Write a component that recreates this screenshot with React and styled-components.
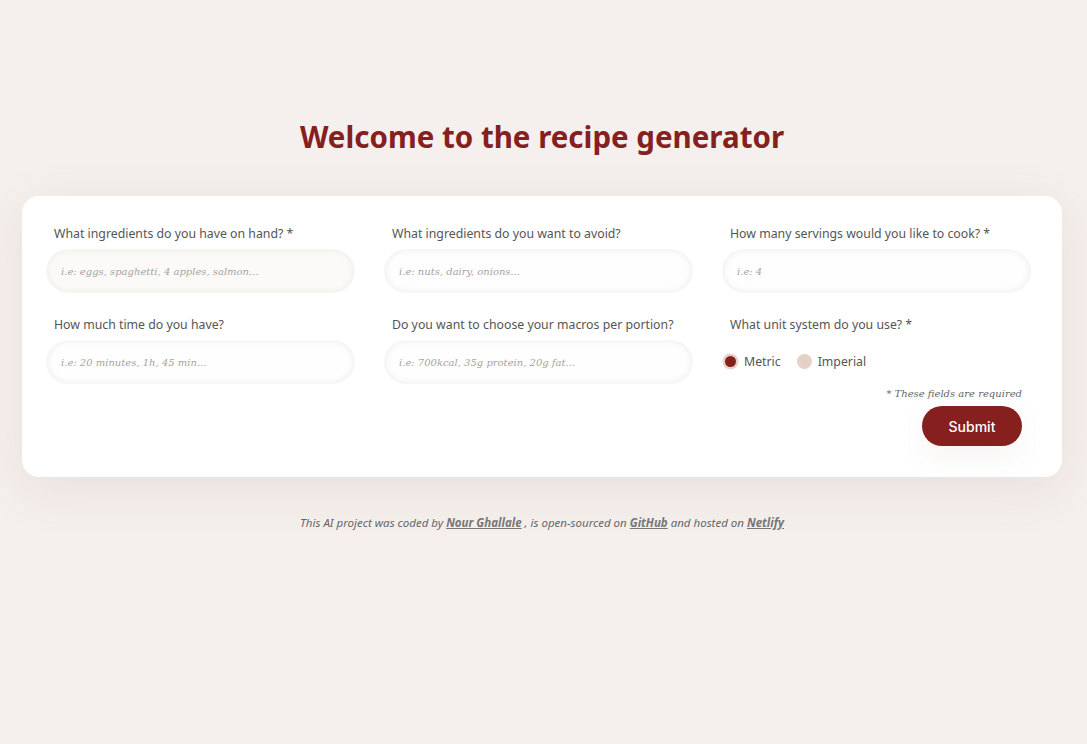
import React from "react";
import styled, { createGlobalStyle } from "styled-components";

const GlobalStyle = createGlobalStyle`
  html, body {
    margin: 0;
    padding: 0;
    background: #f5f0ed;
  }
  body {
    font-family: "Noto Sans", "Open Sans", sans-serif;
    color: #555;
  }
  * { box-sizing: border-box; }
`;

const fields = [
  { label: "What ingredients do you have on hand? *", placeholder: "i.e: eggs, spaghetti, 4 apples, salmon...", warm: true },
  { label: "What ingredients do you want to avoid?", placeholder: "i.e: nuts, dairy, onions..." },
  { label: "How many servings would you like to cook? *", placeholder: "i.e: 4" },
  { label: "How much time do you have?", placeholder: "i.e: 20 minutes, 1h, 45 min..." },
  { label: "Do you want to choose your macros per portion?", placeholder: "i.e: 700kcal, 35g protein, 20g fat..." }
];

export default function App() {
  return (
    <Page>
      <GlobalStyle />
      <Title>Welcome to the recipe generator</Title>
      <Card>
        <Grid>
          {fields.map((f) => (
            <Field key={f.label}>
              <Label>{f.label}</Label>
              <Input placeholder={f.placeholder} $warm={f.warm} />
            </Field>
          ))}
          <Field>
            <Label>What unit system do you use? *</Label>
            <Radios>
              <RadioItem>
                <Dot $checked />
                Metric
              </RadioItem>
              <RadioItem>
                <Dot />
                Imperial
              </RadioItem>
            </Radios>
          </Field>
        </Grid>
        <Footer>
          <Required>* These fields are required</Required>
          <Submit>Submit</Submit>
        </Footer>
      </Card>
      <Credits>
        This AI project was coded by <a>Nour Ghallale</a> , is open-sourced on{" "}
        <a>GitHub</a> and hosted on <a>Netlify</a>
      </Credits>
    </Page>
  );
}

const Page = styled.div`
  min-height: 744px;
  padding: 117px 25px 0 22px;
`;

const Title = styled.h1`
  margin: 0 0 39px;
  text-align: center;
  font-size: 29.5px;
  line-height: 40px;
  font-weight: 700;
  color: #85201f;
`;

const Card = styled.div`
  background: #fff;
  border-radius: 17px;
  padding: 28px 40px 31px 25px;
  box-shadow: 0 12px 50px rgba(150, 100, 90, 0.12);
`;

const Grid = styled.div`
  display: grid;
  grid-template-columns: repeat(3, 307px);
  column-gap: 31px;
  row-gap: 23px;
`;

const Field = styled.div`
  display: flex;
  flex-direction: column;
`;

const Label = styled.label`
  font-size: 12.3px;
  line-height: 20px;
  color: #555;
  padding-left: 7px;
  margin-bottom: 6px;
`;

const Input = styled.input`
  height: 42px;
  border: none;
  outline: none;
  border-radius: 21px;
  padding: 0 14px;
  background: ${(p) => (p.$warm ? "#fcfaf8" : "#fefefe")};
  box-shadow: inset 0 0 6px rgba(150, 130, 120, 0.14), 0 0 0 1px rgba(200, 190, 185, 0.12);
  font-family: "DejaVu Serif", "Liberation Serif", serif;
  font-style: italic;
  font-size: 10px;
  color: #555;
  &::placeholder {
    color: #a8a3a0;
  }
`;

const Radios = styled.div`
  display: flex;
  align-items: center;
  gap: 16px;
  height: 40px;
`;

const RadioItem = styled.span`
  display: flex;
  align-items: center;
  gap: 6px;
  font-size: 12.3px;
  color: #555;
`;

const Dot = styled.span`
  width: 15px;
  height: 15px;
  border-radius: 50%;
  background: ${(p) => (p.$checked ? "#85201f" : "#e6d1c7")};
  box-shadow: ${(p) => (p.$checked ? "0 0 0 2.5px #e8d2c8" : "none")};
  ${(p) => p.$checked && "width: 11px; height: 11px; margin: 0 2px;"}
`;

const Footer = styled.div`
  display: flex;
  flex-direction: column;
  align-items: flex-end;
  margin-top: 5px;
`;

const Required = styled.div`
  font-family: "DejaVu Serif", "Liberation Serif", serif;
  font-style: italic;
  font-size: 10px;
  color: #666;
  margin-bottom: 7px;
`;

const Submit = styled.button`
  width: 100px;
  height: 40px;
  border: none;
  border-radius: 20px;
  background: #85201f;
  color: #fff;
  font-family: Inter, "Noto Sans", sans-serif;
  font-size: 14px;
  font-weight: 500;
  box-shadow: 0 10px 30px rgba(140, 100, 90, 0.08);
`;

const Credits = styled.p`
  margin: 38px 0 0;
  text-align: center;
  font-size: 11.5px;
  font-style: italic;
  color: #666;
  a {
    font-weight: 700;
    text-decoration: underline;
    color: #777;
  }
`;
